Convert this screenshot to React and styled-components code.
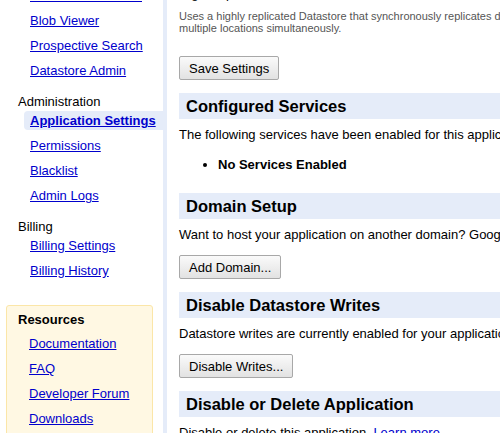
import React from 'react'
import styled, { createGlobalStyle } from 'styled-components'

const GlobalStyle = createGlobalStyle`
  html, body {
    margin: 0;
    padding: 0;
    background: #fff;
    overflow: hidden;
  }
  body {
    font-family: "Liberation Sans", Arial, sans-serif;
    font-size: 13px;
    color: #000;
  }
`

const navGroups = [
  { label: null, items: ['Datastore Statistics', 'Blob Viewer', 'Prospective Search', 'Datastore Admin'] },
  { label: 'Administration', items: ['Application Settings', 'Permissions', 'Blacklist', 'Admin Logs'], active: 'Application Settings' },
  { label: 'Billing', items: ['Billing Settings', 'Billing History'] },
]

const resources = ['Documentation', 'FAQ', 'Developer Forum', 'Downloads']

function App() {
  return (
    <Page>
      <GlobalStyle />
      <Sidebar>
        {navGroups.map((group, i) => (
          <NavGroup key={i}>
            {group.label && <GroupLabel>{group.label}</GroupLabel>}
            <NavList>
              {group.items.map(item => (
                <NavItem key={item} active={item === group.active}>
                  <NavLink href="#" active={item === group.active}>{item}</NavLink>
                </NavItem>
              ))}
            </NavList>
          </NavGroup>
        ))}

        <ResourceBox>
          <ResourceTitle>Resources</ResourceTitle>
          <ResourceList>
            {resources.map(r => (
              <ResourceItem key={r}><NavLink href="#">{r}</NavLink></ResourceItem>
            ))}
          </ResourceList>
        </ResourceBox>
      </Sidebar>

      <Main>
        <OptionLabel>High Replication</OptionLabel>
        <Hint>
          Uses a highly replicated Datastore that synchronously replicates data across<br />
          multiple locations simultaneously.
        </Hint>
        <Button first>Save Settings</Button>

        <SectionHeader>Configured Services</SectionHeader>
        <Text>The following services have been enabled for this application:</Text>
        <Bullets>
          <li>No Services Enabled</li>
        </Bullets>

        <SectionHeader>Domain Setup</SectionHeader>
        <Text>Want to host your application on another domain? Google Apps lets you do that.</Text>
        <Button>Add Domain...</Button>

        <SectionHeader>Disable Datastore Writes</SectionHeader>
        <Text>Datastore writes are currently enabled for your application.</Text>
        <Button>Disable Writes...</Button>

        <SectionHeader>Disable or Delete Application</SectionHeader>
        <Text>Disable or delete this application. <NavLink href="#">Learn more</NavLink></Text>
      </Main>
    </Page>
  )
}

export default App

const Page = styled.div`
  display: flex;
  width: 100vw;
  height: 100vh;
  overflow: hidden;
`

const Sidebar = styled.nav`
  width: 163px;
  flex-shrink: 0;
  margin-top: -14px;
`

const NavGroup = styled.div`
  & + & {
    margin-top: 12px;
  }
`

const GroupLabel = styled.div`
  padding-left: 18px;
  line-height: 19px;
`

const NavList = styled.ul`
  list-style: none;
  margin: 0;
  padding: 0;
  display: flex;
  flex-direction: column;
  gap: 6px;
`

const NavItem = styled.li`
  margin-left: 24px;
  padding-left: 6px;
  line-height: 19px;
  white-space: nowrap;
  border-radius: 4px 0 0 4px;
  background: ${p => (p.active ? '#e5ecf9' : 'transparent')};
`

const NavLink = styled.a`
  color: #0000cc;
  text-decoration: underline;
  font-weight: ${p => (p.active ? 'bold' : 'normal')};
`

const ResourceBox = styled.div`
  margin: 25px 10px 0 6px;
  padding: 4px 0 20px 11px;
  background: #fff8e3;
  border: 1px solid #fbe6a8;
  border-radius: 3px;
`

const ResourceTitle = styled.div`
  font-weight: bold;
  line-height: 19px;
  margin-bottom: 5px;
`

const ResourceList = styled.ul`
  list-style: none;
  margin: 0;
  padding: 0 0 0 11px;
  display: flex;
  flex-direction: column;
  gap: 6px;
`

const ResourceItem = styled.li`
  line-height: 19px;
  white-space: nowrap;
`

const Main = styled.main`
  flex: 1;
  min-width: 0;
  margin-top: -14px;
  border-left: 4px solid #e5ecf9;
  padding-left: 12px;
  white-space: nowrap;
`

const OptionLabel = styled.div`
  line-height: 16px;
`

const Hint = styled.div`
  margin-top: 8px;
  font-size: 11px;
  line-height: 12px;
  color: #555;
`

const Button = styled.button`
  display: block;
  box-sizing: border-box;
  height: 24px;
  margin-top: ${p => (p.first ? '22px' : '12px')};
  padding: 0 9px;
  font-family: "Liberation Sans", Arial, sans-serif;
  font-size: 13px;
  color: #000;
  background: linear-gradient(#fafafa, #e2e2e2);
  border: 1px solid #a8a8a8;
  border-radius: 2px;
`

const SectionHeader = styled.h2`
  margin: 13px 0 0;
  height: 26px;
  padding-left: 7px;
  background: #e5ecf9;
  font-size: 16.5px;
  line-height: 26px;
  font-weight: bold;
`

const Text = styled.p`
  margin: 8px 0 0;
  line-height: 16px;
`

const Bullets = styled.ul`
  margin: 14px 0 20px;
  padding-left: 39px;
  line-height: 16px;
  font-weight: bold;
`
